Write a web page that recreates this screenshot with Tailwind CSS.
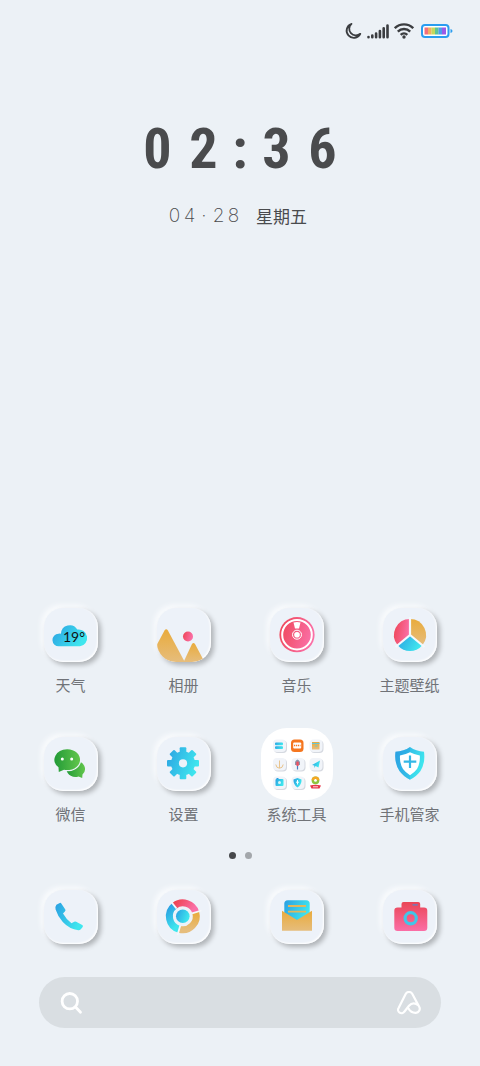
<!DOCTYPE html>
<html lang="zh-CN">
<head>
    <meta charset="UTF-8">
    <meta name="viewport" content="width=device-width, initial-scale=1.0">
    <title>桌面</title>
    <script src="https://cdn.jsdelivr.net/npm/@tailwindcss/browser@4"></script>
</head>
<body class="min-h-screen flex flex-col bg-[#ecf1f6] pb-[38px] font-['Noto_Sans','Noto_Sans_CJK_SC',sans-serif] text-[#4a4b4d]">

    <!-- shared gradients -->
    <svg class="absolute w-0 h-0" aria-hidden="true">
        <defs>
            <linearGradient id="blue" x1="0" y1="0" x2="1" y2="0.4"><stop offset="0" stop-color="#2a9fe2"/><stop offset="1" stop-color="#3fe6ee"/></linearGradient>
            <linearGradient id="blueDown" x1="0" y1="0" x2="0.4" y2="1"><stop offset="0" stop-color="#2a9fe2"/><stop offset="1" stop-color="#3fe6ee"/></linearGradient>
            <linearGradient id="red" x1="0" y1="0" x2="1" y2="0.3"><stop offset="0" stop-color="#ee4453"/><stop offset="1" stop-color="#fa6fa6"/></linearGradient>
            <linearGradient id="redDown" x1="0" y1="0" x2="0" y2="1"><stop offset="0" stop-color="#ea4656"/><stop offset="1" stop-color="#fb6ea6"/></linearGradient>
            <linearGradient id="gold" x1="0" y1="0" x2="0" y2="1"><stop offset="0" stop-color="#e9ab3c"/><stop offset="1" stop-color="#e6bd7c"/></linearGradient>
            <linearGradient id="green" x1="0" y1="0" x2="1" y2="0"><stop offset="0" stop-color="#229a37"/><stop offset="1" stop-color="#62c64c"/></linearGradient>
        </defs>
    </svg>

    <header class="flex items-center justify-end pt-[21px] pr-[27px] h-[41px]">
        <svg class="w-[18px] h-[18px] mr-[5px]" viewBox="0 0 18 18" fill="none" stroke="#3b3d40" stroke-width="1.800" stroke-linejoin="round"><path d="M7.500 1.800A7.200 7.200 0 1 0 16.300 11.800A6.400 6.400 0 0 1 7.500 1.800Z"/></svg>
        <svg class="w-[22px] h-[16px] mr-[5px]" viewBox="0 0 22 16" stroke="#3b3d40" stroke-width="2.600" stroke-linecap="round"><path d="M1.500 14v.2M5.300 12.500v1.700M9.100 10.500v3.700M12.900 8v6.200M16.700 5.200v9M20.500 2.500v11.700" /></svg>
        <svg class="w-[20px] h-[16px] mr-[7px]" viewBox="0 0 20 16" fill="none" stroke="#3b3d40" stroke-width="2.400"><path d="M.8 5.200a13 13 0 0 1 18.400 0M3.800 8.600a8.800 8.800 0 0 1 12.400 0M6.700 11.800a4.700 4.700 0 0 1 6.600 0"/><circle cx="10" cy="14" r="1.700" fill="#3b3d40" stroke="none"/></svg>
        <svg class="w-[32px] h-[14px]" viewBox="0 0 32 14">
            <rect x="1" y="1" width="26.500" height="12" rx="3" fill="#fff" stroke="#2a9df0" stroke-width="2"/>
            <path d="M29.500 5q2 .5 2 2t-2 2z" fill="#2a9df0"/>
            <rect x="3.500" y="3.500" width="3.600" height="7" fill="#f2707c"/>
            <rect x="7" y="3.500" width="3.600" height="7" fill="#f0ae62"/>
            <rect x="10.500" y="3.500" width="3.600" height="7" fill="#c5d95c"/>
            <rect x="14" y="3.500" width="3.600" height="7" fill="#5bc49a"/>
            <rect x="17.500" y="3.500" width="3.600" height="7" fill="#4e9cec"/>
            <rect x="21" y="3.500" width="4" height="7" fill="#9a5be8"/>
        </svg>
    </header>

    <main class="flex-1 flex flex-col">
        <section class="pt-[80px]">
            <h1 class="flex justify-center text-center text-[56px] leading-[56px] font-bold font-['Liberation_Sans_Narrow','Roboto_Condensed','Liberation_Sans',sans-serif]">
                <span class="w-[46px]">0</span><span class="w-[46px]">2</span><span class="w-[27px]">:</span><span class="w-[46px]">3</span><span class="w-[46px]">6</span>
            </h1>
            <p class="flex justify-center items-center mt-[27px] pr-[6px] text-center leading-6">
                <span class="flex text-[19px] font-extralight font-['Inter',sans-serif]">
                    <span class="w-[15px]">0</span><span class="w-[15px]">4</span><span class="w-[14px]">·</span><span class="w-[15px]">2</span><span class="w-[15px]">8</span>
                </span>
                <span class="ml-[15px] text-[17px] font-normal font-['Noto_Sans_CJK_SC',sans-serif]">星期五</span>
            </p>
        </section>

        <nav class="mt-auto grid grid-cols-4 gap-y-[41px] px-[14px] text-[15px] leading-[22px] text-[#707378]">
            <a href="#" class="flex flex-col items-center gap-3">
                <span class="w-[54px] h-[54px] rounded-[19px] bg-[#edf2f9] overflow-hidden shadow-[3px_3px_5px_rgba(0,0,0,0.26),-3px_-3px_5px_#f9fbfd,inset_-1px_-1px_2px_#fff]">
                    <svg viewBox="0 0 54 54">
                        <path d="M15 38.300a6.300 6.300 0 0 1-.5-12.600q1.500-.3 2.500 0a8.800 8.800 0 0 1 16.300-4.200 8.500 8.500 0 1 1 2.700 16.800z" fill="url(#blue)"/>
                        <text x="19" y="34" font-size="14" fill="#111" class="font-['Lato']">19°</text>
                    </svg>
                </span>
                天气
            </a>
            <a href="#" class="flex flex-col items-center gap-3">
                <span class="w-[54px] h-[54px] rounded-[19px] bg-[#edf2f9] overflow-hidden shadow-[3px_3px_5px_rgba(0,0,0,0.26),-3px_-3px_5px_#f9fbfd,inset_-1px_-1px_2px_#fff]">
                    <svg viewBox="0 0 54 54">
                        <path d="M-4 44L7.500 22.500q1.700-2.500 3.400 0L27 52.500v1.500H-4z" fill="url(#gold)"/>
                        <path d="M27 53L35 36q1.500-2.200 3 0L46 51v3H27z" fill="url(#gold)"/>
                        <circle cx="31" cy="28.500" r="5" fill="url(#red)"/>
                    </svg>
                </span>
                相册
            </a>
            <a href="#" class="flex flex-col items-center gap-3">
                <span class="w-[54px] h-[54px] rounded-[19px] bg-[#edf2f9] overflow-hidden shadow-[3px_3px_5px_rgba(0,0,0,0.26),-3px_-3px_5px_#f9fbfd,inset_-1px_-1px_2px_#fff]">
                    <svg viewBox="0 0 54 54">
                        <circle cx="27" cy="26.700" r="17.600" fill="url(#red)"/>
                        <circle cx="27" cy="26.700" r="14.800" fill="none" stroke="#fff" stroke-width="2"/>
                        <path d="M23.500 14.500q3.500-1 7 0L29 20.500h-4z" fill="#fff"/>
                        <circle cx="27" cy="26.700" r="4.500" fill="none" stroke="#fff"/>
                        <circle cx="27" cy="26.700" r="2.800" fill="#fff"/>
                    </svg>
                </span>
                音乐
            </a>
            <a href="#" class="flex flex-col items-center gap-3">
                <span class="w-[54px] h-[54px] rounded-[19px] bg-[#edf2f9] overflow-hidden shadow-[3px_3px_5px_rgba(0,0,0,0.26),-3px_-3px_5px_#f9fbfd,inset_-1px_-1px_2px_#fff]">
                    <svg viewBox="0 0 54 54">
                        <path d="M27 27V11a16 16 0 0 0-12.500 26z" fill="url(#red)"/>
                        <path d="M27 27V11a16 16 0 0 1 12.500 26z" fill="url(#gold)"/>
                        <path d="M27 27L14.500 37a16 16 0 0 0 25 0z" fill="url(#blue)"/>
                        <path d="M27 9v18L12.500 39M27 27l14.500 12" fill="none" stroke="#f4f8fc" stroke-width="2.200"/>
                    </svg>
                </span>
                主题壁纸
            </a>
            <a href="#" class="flex flex-col items-center gap-3">
                <span class="w-[54px] h-[54px] rounded-[19px] bg-[#edf2f9] overflow-hidden shadow-[3px_3px_5px_rgba(0,0,0,0.26),-3px_-3px_5px_#f9fbfd,inset_-1px_-1px_2px_#fff]">
                    <svg viewBox="0 0 54 54">
                        <path d="M32 24a9 8 0 0 1 6.500 13.500l-.3 3.500-3.700-1.500A9 8 0 1 1 32 24z" fill="url(#green)"/>
                        <path d="M23.300 12.300a12.600 10.400 0 1 1-3.300 20.400L14.800 35l-.3-4.700a12.600 10.400 0 0 1 8.800-18z" fill="url(#green)" stroke="#edf2f9" stroke-width="2.400" paint-order="stroke"/>
                        <circle cx="18.300" cy="22" r="1.500" fill="#fff"/><circle cx="27.700" cy="22" r="1.500" fill="#fff"/>
                    </svg>
                </span>
                微信
            </a>
            <a href="#" class="flex flex-col items-center gap-3">
                <span class="w-[54px] h-[54px] rounded-[19px] bg-[#edf2f9] overflow-hidden shadow-[3px_3px_5px_rgba(0,0,0,0.26),-3px_-3px_5px_#f9fbfd,inset_-1px_-1px_2px_#fff]">
                    <svg viewBox="0 0 54 54">
                        <mask id="gear">
                            <g fill="#fff">
                                <circle cx="26" cy="26.300" r="12"/>
                                <rect x="22.700" y="10.300" width="6.600" height="32" rx="1"/>
                                <rect x="22.700" y="10.300" width="6.600" height="32" rx="1" transform="rotate(45 26 26.300)"/>
                                <rect x="22.700" y="10.300" width="6.600" height="32" rx="1" transform="rotate(90 26 26.300)"/>
                                <rect x="22.700" y="10.300" width="6.600" height="32" rx="1" transform="rotate(135 26 26.300)"/>
                            </g>
                            <circle cx="26" cy="26.300" r="4.100" fill="#000"/>
                        </mask>
                        <rect x="9" y="9" width="34" height="34" fill="url(#blue)" mask="url(#gear)"/>
                    </svg>
                </span>
                设置
            </a>
            <a href="#" class="flex flex-col items-center gap-3">
                <!-- folder, larger than a normal tile -->
                <span class="w-[72px] h-[72px] -m-[9px] rounded-[26px] bg-white">
                    <svg viewBox="0 0 72 72">
                        <g fill="#d5d9e0">
                            <rect x="13" y="12.500" width="13" height="12.500" rx="4"/><rect x="49.500" y="12.500" width="13" height="12.500" rx="4"/>
                            <rect x="13" y="31" width="13" height="12.500" rx="4"/><rect x="31.500" y="31" width="13" height="12.500" rx="4"/><rect x="49.500" y="31" width="13" height="12.500" rx="4"/>
                            <rect x="13" y="49.500" width="13" height="12.500" rx="4"/><rect x="31.500" y="49.500" width="13" height="12.500" rx="4"/>
                        </g>
                        <g fill="#f1f4f9">
                            <rect x="12" y="11.500" width="13" height="12.500" rx="4"/><rect x="48.500" y="11.500" width="13" height="12.500" rx="4"/>
                            <rect x="12" y="30" width="13" height="12.500" rx="4"/><rect x="30.500" y="30" width="13" height="12.500" rx="4"/><rect x="48.500" y="30" width="13" height="12.500" rx="4"/>
                            <rect x="12" y="48.500" width="13" height="12.500" rx="4"/><rect x="30.500" y="48.500" width="13" height="12.500" rx="4"/>
                        </g>
                        <rect x="14" y="14.500" width="8" height="2.800" rx="1" fill="url(#blue)"/><rect x="14" y="18.300" width="8" height="2.800" rx="1" fill="url(#blue)"/>
                        <rect x="30" y="11.500" width="12.500" height="12.500" rx="3.500" fill="#f5761f"/>
                        <rect x="32.200" y="14.500" width="8" height="6" rx="1" fill="#fff"/><path d="M33 17.500h6.500" stroke="#f5761f" stroke-width="1.500" stroke-dasharray="1.300 .7"/>
                        <rect x="51" y="14" width="7.500" height="7.500" fill="url(#gold)"/><path d="M51 15.500h7.500M54 18h2.500" stroke="#63c6d8"/>
                        <path d="M18.500 32.500v7.500M14.800 36.500q.5 3.700 3.700 3.700t3.700-3.700" fill="none" stroke="#e9c48d"/>
                        <path d="M36.500 37v4.500" stroke="#4b7fc0" stroke-width="1.200"/><path d="M34 34q2.500-5 5 0v3h-5z" fill="#8d97ac"/><rect x="35.300" y="33.500" width="2.500" height="4.500" rx="1" fill="#ec5264"/>
                        <path d="M51 37l8-4.500-1.500 7-3-1.500-1 2-.3-2.500z" fill="url(#blue)"/>
                        <rect x="14.500" y="51" width="8" height="7" rx="1" fill="url(#blue)"/><circle cx="18.500" cy="54.500" r="1.500" fill="#d7f5fa"/><path d="M15.500 50.500h2" stroke="#2a9fe2"/>
                        <path d="M36.500 50l4 1.500q.3 5-4 8-4.300-3-4-8z" fill="url(#blue)"/><path d="M36.500 52v4.500M35 54.200h3" stroke="#fff"/>
                        <circle cx="54.500" cy="52.300" r="2.700" fill="none" stroke="#8dc53d" stroke-width="2.400"/><path d="M51.800 52.300a2.700 2.700 0 0 1 5.400 0" fill="none" stroke="#f6a623" stroke-width="2.400"/>
                        <path d="M49 57.500q5.500-1.500 11 0l-1.500 3h-8z" fill="#e7374a"/><path d="M52 58.800h5" stroke="#fff" stroke-width=".8"/>
                    </svg>
                </span>
                系统工具
            </a>
            <a href="#" class="flex flex-col items-center gap-3">
                <span class="w-[54px] h-[54px] rounded-[19px] bg-[#edf2f9] overflow-hidden shadow-[3px_3px_5px_rgba(0,0,0,0.26),-3px_-3px_5px_#f9fbfd,inset_-1px_-1px_2px_#fff]">
                    <svg viewBox="0 0 54 54">
                        <path d="M27 10q6 4.300 14 4.700 1.500 11-3.500 19.300Q34 39 27 42.800 20 39 16.500 34 11 25.500 12.500 14.700 21 14.300 27 10z" fill="url(#blue)"/>
                        <path d="M27 10q-6 4.300-14.500 4.700Q11 25.500 16.500 34 20 39 27 42.800z" fill="#2a9fe2" opacity=".35"/>
                        <path d="M27 15.300q5 2.500 9.800 3.200.6 7.500-2.800 13.500-2.500 3.500-7 6.200-4.500-2.700-7-6.200-3.600-6-3-13.500 5-.7 10-3.200z" fill="#fff"/>
                        <path d="M27 18.500v12.500M20.700 24.700h12.600" stroke="#35b8e6" stroke-width="2.200"/>
                    </svg>
                </span>
                手机管家
            </a>
        </nav>

        <div class="flex justify-center gap-[9px] mt-[27px] mb-[31px]">
            <span class="w-[7px] h-[7px] rounded-full bg-[#46484b]"></span>
            <span class="w-[7px] h-[7px] rounded-full bg-[#a3a7ab]"></span>
        </div>
    </main>

    <footer>
        <nav class="grid grid-cols-4 justify-items-center px-[14px]">
            <a href="#" aria-label="电话" class="w-[54px] h-[54px] rounded-[19px] bg-[#edf2f9] overflow-hidden shadow-[3px_3px_5px_rgba(0,0,0,0.26),-3px_-3px_5px_#f9fbfd,inset_-1px_-1px_2px_#fff]">
                <svg viewBox="0 0 54 54">
                    <path d="M15.300 13.200q1.200-.8 2 .3l4 6q.6 1-.4 2l-1.900 2q3 5.500 8.500 9.800l2.700-1.600q1-.6 2 0l6 3.300q1.200.7.500 1.900l-1.900 2.400q-1 1-2.500.9-8.800-1-15.500-8.200-5-5.500-7.200-12.500-.6-3 .8-4.700z" fill="url(#blue)"/>
                </svg>
            </a>
            <a href="#" aria-label="浏览器" class="w-[54px] h-[54px] rounded-[19px] bg-[#edf2f9] overflow-hidden shadow-[3px_3px_5px_rgba(0,0,0,0.26),-3px_-3px_5px_#f9fbfd,inset_-1px_-1px_2px_#fff]">
                <svg viewBox="0 0 54 54" fill="none">
                    <g stroke-width="7">
                        <path d="M17.500 15.700A13.500 13.500 0 0 1 38.700 22.400" stroke="url(#red)"/>
                        <path d="M38.700 22.400A13.500 13.500 0 0 1 22.300 39.300" stroke="url(#gold)"/>
                        <path d="M22.300 39.300A13.500 13.500 0 0 1 17.500 15.700" stroke="url(#blueDown)"/>
                    </g>
                    <path d="M19.500 18.500L14 11.600M35 23.400l9.500-2.900M23.300 35.500L20.500 45" stroke="#f4f7fb" stroke-width="1.800"/>
                    <circle cx="25.800" cy="26.300" r="6.800" fill="url(#blue)"/>
                </svg>
            </a>
            <a href="#" aria-label="短信" class="w-[54px] h-[54px] rounded-[19px] bg-[#edf2f9] overflow-hidden shadow-[3px_3px_5px_rgba(0,0,0,0.26),-3px_-3px_5px_#f9fbfd,inset_-1px_-1px_2px_#fff]">
                <svg viewBox="0 0 54 54">
                    <rect x="14.300" y="10.300" width="25.400" height="22" rx="3.500" fill="url(#blue)"/>
                    <path d="M12 20.700l15 9.300 15-9.300v20H12z" fill="url(#gold)"/>
                    <path d="M18 16h18M18 21.700h18" stroke="#e0b75c" stroke-width="1.800"/>
                </svg>
            </a>
            <a href="#" aria-label="相机" class="w-[54px] h-[54px] rounded-[19px] bg-[#edf2f9] overflow-hidden shadow-[3px_3px_5px_rgba(0,0,0,0.26),-3px_-3px_5px_#f9fbfd,inset_-1px_-1px_2px_#fff]">
                <svg viewBox="0 0 54 54">
                    <path d="M20.500 12h14.700q2 0 2 2v3.500H41q3.300 0 3.300 3.300v17q0 3.300-3.300 3.300H14.600q-3.300 0-3.300-3.300v-17q0-3.300 3.300-3.300h3.900V14q0-2 2-2z" fill="url(#redDown)"/>
                    <circle cx="27.700" cy="28.300" r="5.600" fill="none" stroke="#42c6e8" stroke-width="3.200"/>
                    <path d="M29.500 14.800h5.300" stroke="#5b86c8" stroke-width="1.300"/>
                </svg>
            </a>
        </nav>

        <form class="flex items-center mt-[33px] mx-[39px] h-[51px] px-5 rounded-full bg-[#d9dee2]">
            <button type="button" aria-label="搜索">
                <svg class="w-6 h-6" viewBox="0 0 24 24" fill="none" stroke="#fff" stroke-width="2.800" stroke-linecap="round"><circle cx="10.800" cy="10.200" r="7.700"/><path d="M16.500 16l5 5.200"/></svg>
            </button>
            <input type="search" aria-label="搜索" class="flex-1 min-w-0 h-full bg-transparent outline-none">
            <button type="button" aria-label="语音助手">
                <svg class="w-6 h-6" viewBox="0 0 24 24" fill="none" stroke="#fff" stroke-width="2.200" stroke-linecap="round" stroke-linejoin="round"><path d="M11.500 17.500q2.500 4.500 7.300 4.300a4 4 0 0 0 3.400-6L15.200 2.800a3.700 3.700 0 0 0-6.400 0L1.600 17a3.300 3.300 0 0 0 5.700 3.700L12 14.800q4-4.500 9.500-.5"/></svg>
            </button>
        </form>
    </footer>
</body>
</html>
